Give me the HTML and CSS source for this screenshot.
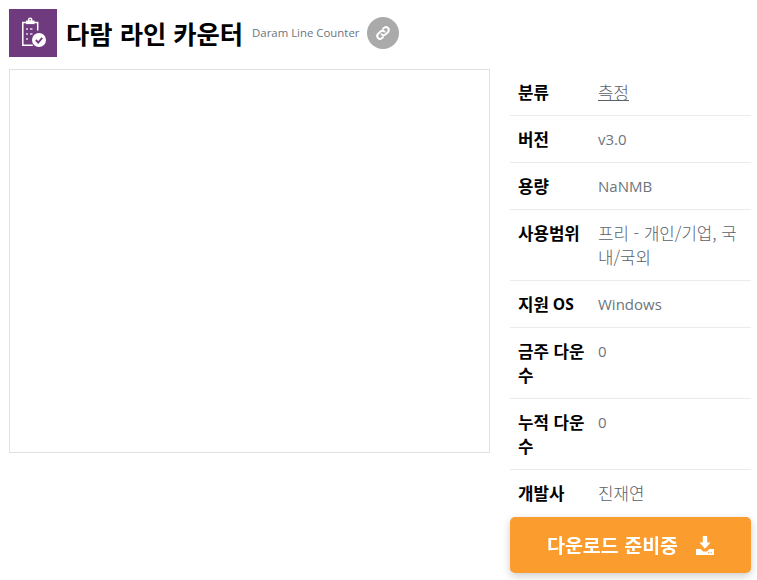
FILE: index.html
```html
<!DOCTYPE html>
<html lang="ko">
<head>
<meta charset="utf-8">
<title>다람 라인 카운터</title>
<link rel="stylesheet" href="styles.css">
</head>
<body>
<header class="header">
  <div class="logo">
    <svg width="48" height="48" viewBox="0 0 48 48" fill="none" stroke="#fff" stroke-width="1.5">
      <path d="M18 13.5h-4.2v22.7h10"/>
      <path d="M24.5 13.5h4.2v8"/>
      <rect x="17" y="11.5" width="8.5" height="3.6" fill="#fff" stroke="none"/>
      <circle cx="21.2" cy="10.8" r="1.6"/>
      <path d="M17 20h2M21 20h2.5M17 25h2M21 25h2.5M17 30h2" stroke-width="1.5" stroke-opacity=".8"/>
      <circle cx="30" cy="31" r="7" fill="#fff" stroke="none"/>
      <path d="M26.8 31l2.4 2.5 4-4.6" stroke="#6f3b7e" stroke-width="1.9"/>
    </svg>
  </div>
  <h1 class="title">다람 라인 카운터</h1>
  <span class="subtitle">Daram Line Counter</span>
  <span class="link-btn">
    <svg width="18" height="18" viewBox="0 0 18 18" fill="none" stroke="#fff" stroke-width="2" stroke-linecap="round">
      <path d="M7.6 10.4a2.8 2.8 0 0 0 4 0l2.6-2.6a2.9 2.9 0 0 0-4-4.1L9 4.9"/>
      <path d="M10.4 7.6a2.8 2.8 0 0 0-4 0l-2.6 2.6a2.9 2.9 0 0 0 4 4.1L9 13.1"/>
    </svg>
  </span>
</header>
<main class="content">
  <div class="frame"></div>
  <table class="info">
    <tr><th><span class="ko">분류</span></th><td><a class="cat ko" href="#">측정</a></td></tr>
    <tr><th><span class="ko">버전</span></th><td>v3.0</td></tr>
    <tr><th><span class="ko">용량</span></th><td>NaNMB</td></tr>
    <tr><th><span class="ko">사용범위</span></th><td><span class="ko">프리 - 개인/기업, 국내/국외</span></td></tr>
    <tr><th><span class="ko">지원</span> <span class="latin">OS</span></th><td>Windows</td></tr>
    <tr><th><span class="ko">금주 다운수</span></th><td>0</td></tr>
    <tr><th><span class="ko">누적 다운수</span></th><td>0</td></tr>
    <tr><th><span class="ko">개발사</span></th><td><span class="ko">진재연</span></td></tr>
  </table>
</main>
<a class="download" href="#">
  <span>다운로드 준비중</span>
  <svg width="18" height="19" viewBox="0 0 18 19" fill="#fff">
    <path d="M6.8 0h4.4v6.5h3.4L9 12.8 3.4 6.5h3.4z"/>
    <path d="M0 13h4.8L7 15.4h4L13.2 13H18v6H0z"/>
    <path d="M12 16.2h1.4v1h-1.4zM14.4 16.2h1.4v1h-1.4z" fill="#fb9c2e"/>
  </svg>
</a>
</body>
</html>
```

FILE: styles.css
```css
* { box-sizing: border-box; }
html, body { height: 100%; }
body {
  margin: 0;
  padding: 9px 6px 0 9px;
  background: #fff;
  font-family: "Open Sans", "Noto Sans CJK KR", sans-serif;
  font-size: 15px;
  line-height: 24px;
  color: #212529;
  overflow: hidden;
}
.ko {
  font-family: "Noto Sans CJK KR", sans-serif;
  font-size: 16.8px;
  line-height: 20px;
  vertical-align: -1px;
}
.latin { font-size: 15.5px; }
.header { display: flex; align-items: center; height: 48px; }
.logo {
  width: 48px; height: 48px; background: #6f3b7e;
  display: flex; align-items: center; justify-content: center;
}
.title {
  margin: 0 0 0 9px;
  font-family: "Noto Sans CJK KR", sans-serif;
  font-size: 25.3px; font-weight: 700; line-height: 32px; color: #000;
}
.subtitle { margin-left: 9px; font-size: 11.4px; color: #6c757d; }
.link-btn {
  margin-left: 8px; width: 32px; height: 32px; border-radius: 50%;
  background: #aaa; display: flex; align-items: center; justify-content: center;
}
.content { display: flex; gap: 20px; margin-top: 12px; align-items: flex-start; }
.frame { width: 481px; height: 384px; border: 1px solid #dee2e6; flex: none; }
.info { width: 241px; border-collapse: collapse; table-layout: fixed; }
.info th, .info td {
  padding: 11px 8px; vertical-align: top; text-align: left;
  border-bottom: 1px solid #e9ecef;
}
.info tr:last-child th, .info tr:last-child td { border-bottom: 0; }
.info th { width: 80px; padding-right: 2px; font-weight: 700; color: #000; }
.info td { color: #6c757d; }
.info td .ko { font-weight: 300; color: #596169; }
.cat { text-decoration: underline; }
.download {
  position: fixed; left: 510px; top: 517px; width: 241px; height: 56px;
  display: flex; align-items: center; justify-content: center; gap: 18px;
  background: #fb9c2e; color: #fff; border-radius: 5px;
  font-family: "Noto Sans CJK KR", sans-serif;
  font-size: 19.5px; font-weight: 700; text-decoration: none;
  box-shadow: 0 3px 8px rgba(0,0,0,.2);
}
```
